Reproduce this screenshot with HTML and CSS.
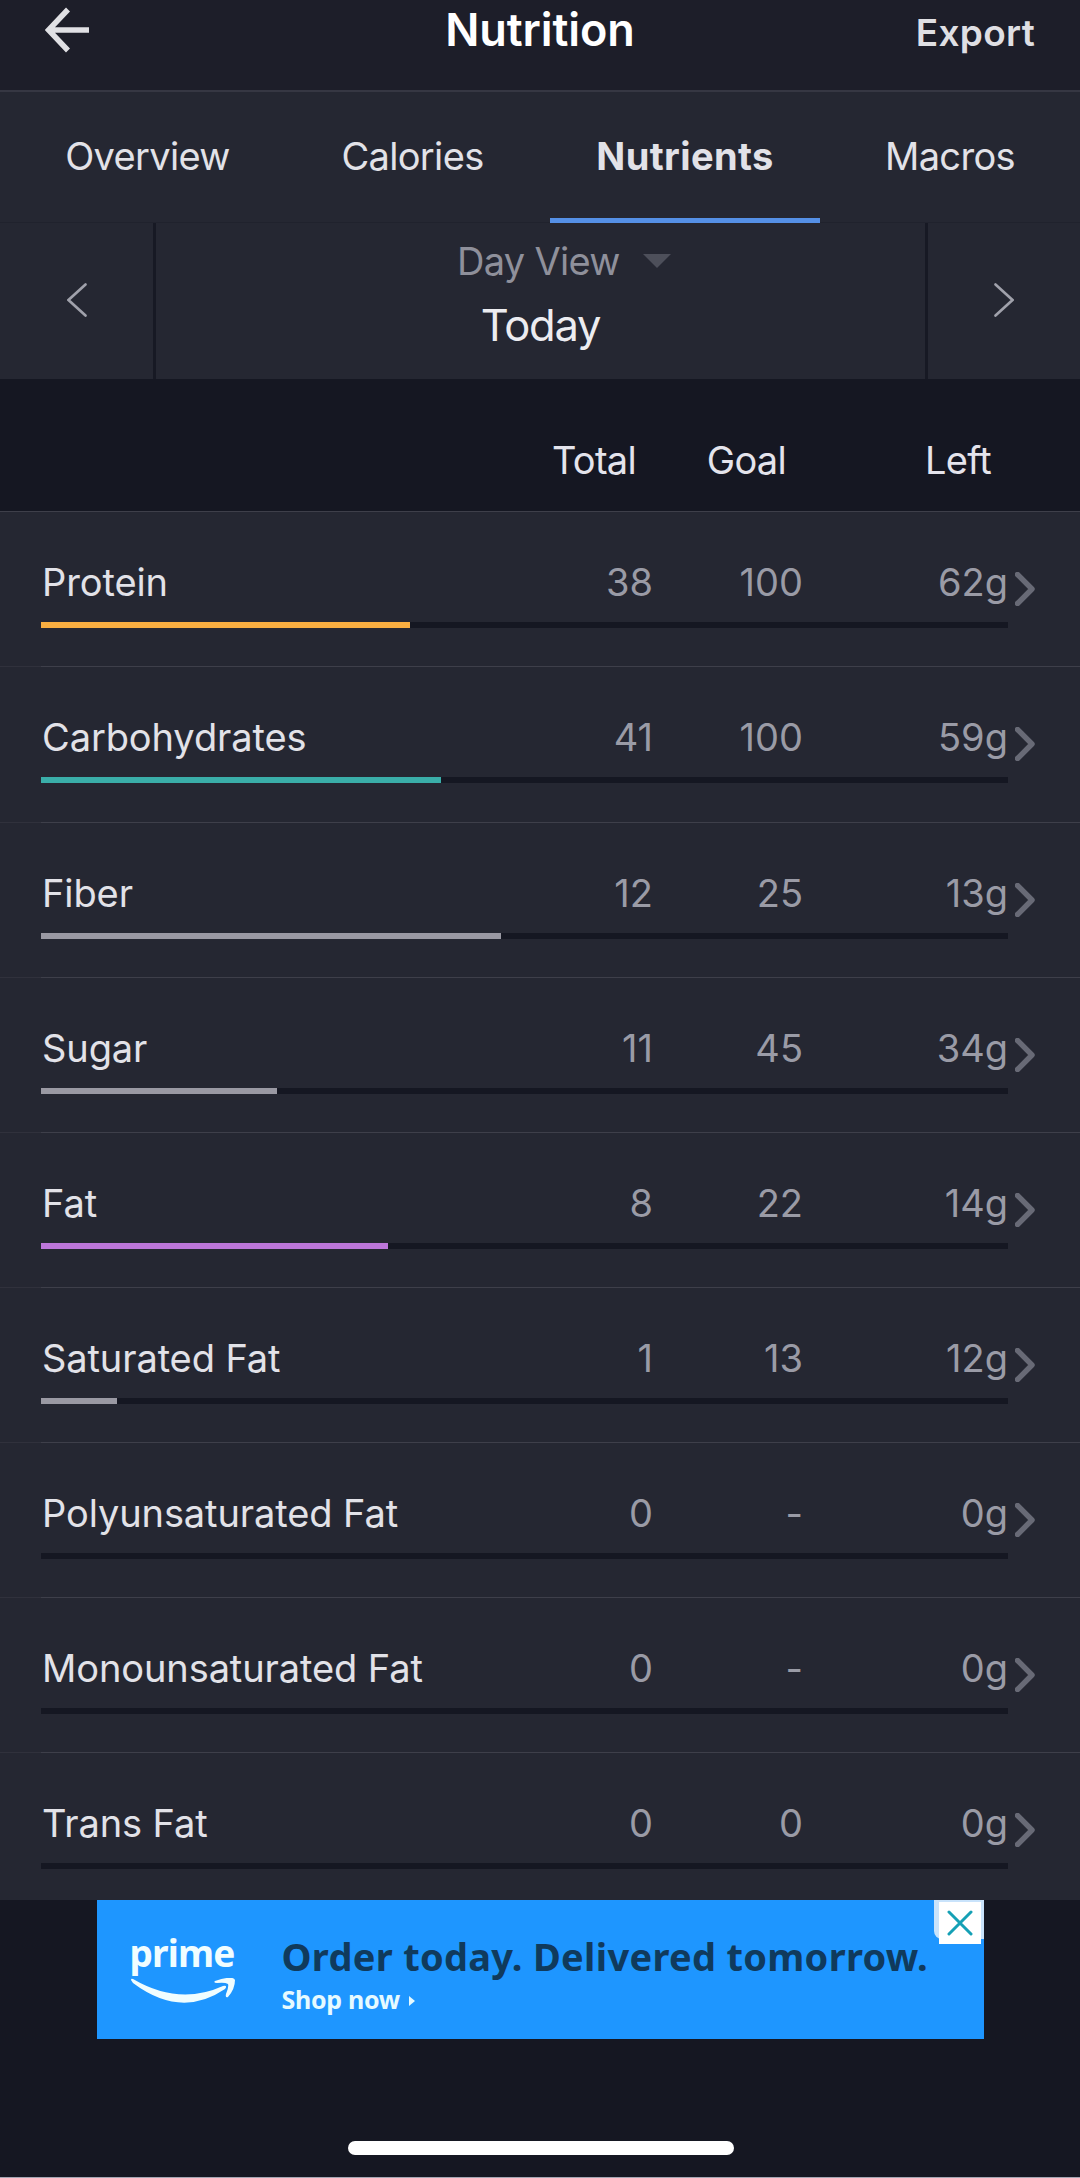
FILE: index.html
```
<!DOCTYPE html>
<html lang="en">
<head>
<meta charset="utf-8">
<meta name="viewport" content="width=device-width, initial-scale=1">
<title>Nutrition</title>
<link rel="stylesheet" href="styles.css">
</head>

<body>

<header class="topbar">
    <svg class="back" viewBox="0 0 44 46"><path d="M23 2.5 L3.5 23 L23 43.500 M4 23 H44" /></svg>
    <h1>Nutrition</h1>
    <a class="export">Export</a>
</header>

<nav class="tabs">
    <a>Overview</a>
    <a>Calories</a>
    <a class="active">Nutrients</a>
    <a>Macros</a>
</nav>

<section class="datenav">
    <div class="arrow"><svg viewBox="0 0 20 34"><path d="M18.500 1.500 L1.500 17 L18.500 32.500" /></svg></div>
    <div class="period">
        <div class="view"><span>Day View</span><svg viewBox="0 0 28 14"><path d="M0 0 H28 L14 14 Z" /></svg></div>
        <div class="day">Today</div>
    </div>
    <div class="arrow"><svg viewBox="0 0 20 34"><path d="M1.500 1.500 L18.500 17 L1.500 32.500" /></svg></div>
</section>

<div class="thead cols"><span></span><span>Total</span><span>Goal</span><span>Left</span></div>

<main class="list">
    <div class="row">
        <div class="cols"><span class="name">Protein</span><span>38</span><span>100</span><span>62g</span></div>
        <div class="bar"><div class="fill protein" style="width: 369px"></div></div>
        <svg class="more" viewBox="0 0 20 34"><path d="M2.500 2.500 L17 17 L2.500 31.500" /></svg>
    </div>
    <div class="row">
        <div class="cols"><span class="name">Carbohydrates</span><span>41</span><span>100</span><span>59g</span></div>
        <div class="bar"><div class="fill carbs" style="width: 400px"></div></div>
        <svg class="more" viewBox="0 0 20 34"><path d="M2.500 2.500 L17 17 L2.500 31.500" /></svg>
    </div>
    <div class="row">
        <div class="cols"><span class="name">Fiber</span><span>12</span><span>25</span><span>13g</span></div>
        <div class="bar"><div class="fill" style="width: 460px"></div></div>
        <svg class="more" viewBox="0 0 20 34"><path d="M2.500 2.500 L17 17 L2.500 31.500" /></svg>
    </div>
    <div class="row">
        <div class="cols"><span class="name">Sugar</span><span>11</span><span>45</span><span>34g</span></div>
        <div class="bar"><div class="fill" style="width: 236px"></div></div>
        <svg class="more" viewBox="0 0 20 34"><path d="M2.500 2.500 L17 17 L2.500 31.500" /></svg>
    </div>
    <div class="row">
        <div class="cols"><span class="name">Fat</span><span>8</span><span>22</span><span>14g</span></div>
        <div class="bar"><div class="fill fat" style="width: 347px"></div></div>
        <svg class="more" viewBox="0 0 20 34"><path d="M2.500 2.500 L17 17 L2.500 31.500" /></svg>
    </div>
    <div class="row">
        <div class="cols"><span class="name">Saturated Fat</span><span>1</span><span>13</span><span>12g</span></div>
        <div class="bar"><div class="fill" style="width: 76px"></div></div>
        <svg class="more" viewBox="0 0 20 34"><path d="M2.500 2.500 L17 17 L2.500 31.500" /></svg>
    </div>
    <div class="row">
        <div class="cols"><span class="name">Polyunsaturated Fat</span><span>0</span><span>-</span><span>0g</span></div>
        <div class="bar"></div>
        <svg class="more" viewBox="0 0 20 34"><path d="M2.500 2.500 L17 17 L2.500 31.500" /></svg>
    </div>
    <div class="row">
        <div class="cols"><span class="name">Monounsaturated Fat</span><span>0</span><span>-</span><span>0g</span></div>
        <div class="bar"></div>
        <svg class="more" viewBox="0 0 20 34"><path d="M2.500 2.500 L17 17 L2.500 31.500" /></svg>
    </div>
    <div class="row">
        <div class="cols"><span class="name">Trans Fat</span><span>0</span><span>0</span><span>0g</span></div>
        <div class="bar"></div>
        <svg class="more" viewBox="0 0 20 34"><path d="M2.500 2.500 L17 17 L2.500 31.500" /></svg>
    </div>
</main>

<footer class="bottom">
    <div class="ad">
        <div class="prime">
            <span>prime</span>
            <svg viewBox="0 0 104 26"><path d="M0 2 Q0 0 2 1 Q48 28 92 8 Q97 7 94 11 Q50 41 2 5 Z" /><path d="M84 3 Q102 -3 104 2 Q104 11 97 19 Q94 20 95 16 Q98 9 97 6 Q94 4 86 5 Q82 5 84 3 Z" /></svg>
        </div>
        <div class="copy">
            <div class="headline">Order today. Delivered tomorrow.</div>
            <div class="shop">Shop now<svg viewBox="0 0 6 10"><path d="M0 0 L6 5 L0 10 Z" /></svg></div>
        </div>
        <div class="adchoice"></div>
        <div class="close"><svg viewBox="0 0 26 26"><path d="M2 2 L24 24 M24 2 L2 24" /></svg></div>
    </div>
    <div class="home"></div>
</footer>

</body>
</html>
```
FILE: styles.css
```
* { box-sizing: border-box; }
body { margin: 0; width: 1080px; height: 2178px; overflow: hidden; display: flex; flex-direction: column; background-color: #151722; color: #e2e2e8; font-family: Inter, "Liberation Sans", sans-serif; font-size: 38px; line-height: 50px; white-space: nowrap; }
svg { display: block; fill: none; }

.topbar { flex: none; height: 92px; display: grid; grid-template-columns: 1fr auto 1fr; align-items: start; padding: 0 45px; background-color: #1d1e29; border-bottom: 2px solid #363743; }
.topbar .back { width: 44px; height: 46px; margin-top: 7px; stroke: #e0e0e4; stroke-width: 5.5; }
.topbar h1 { margin: 3px 0 0; font-size: 45px; line-height: 54px; font-weight: 600; letter-spacing: -0.1px; color: #fff; }
.topbar .export { justify-self: end; margin-top: 8px; font-size: 37px; font-weight: 600; letter-spacing: 0.3px; color: #dfdfe3; }

.tabs { flex: none; height: 131px; display: grid; grid-template-columns: 275px 275px 270px 260px; background-color: #252732; border-bottom: 1px solid #20222d; }
.tabs a { display: flex; justify-content: center; padding-top: 39px; letter-spacing: -0.65px; }
.tabs a:first-child { padding-left: 20px; }
.tabs .active { height: 132px; font-weight: 700; letter-spacing: 0.4px; border-bottom: 6px solid #5590e6; }

.datenav { flex: none; height: 156px; display: grid; grid-template-columns: 153px 1fr 152px; background-color: #252732; }
.datenav .arrow { display: flex; align-items: center; justify-content: center; padding-bottom: 2px; }
.datenav .arrow svg { width: 20px; height: 34px; stroke: #a0a1ab; stroke-width: 2.6; stroke-linecap: round; }
.period { border-left: 3px solid #171924; border-right: 3px solid #171924; padding-top: 13px; }
.view { display: flex; align-items: center; padding-left: 301px; color: #8f909b; letter-spacing: -0.7px; }
.view svg { width: 28px; height: 14px; margin-left: 23px; fill: #4d4f5a; }
.day { text-align: center; font-size: 43.5px; line-height: 54px; padding-top: 12px; letter-spacing: -1.2px; color: #ececf0; }

.cols { display: grid; grid-template-columns: 512px 100px 150px 205px; }
.cols span { text-align: right; }
.thead { flex: none; height: 132.3px; padding: 56px 0 0 24px; letter-spacing: -0.7px; color: #e4e4ec; }

.list { flex: none; height: 1388.7px; overflow: hidden; background-color: #252732; }
.row { position: relative; height: 155.15px; padding: 46px 0 0 41px; background: linear-gradient(to right, #30313c 41px, #3e3f4a 41px) top / 100% 1px no-repeat; }
.row:first-child { background-image: linear-gradient(#3e3f4a, #3e3f4a); }
.row .cols { color: #9a9ba6; }
.row .cols .name { padding-left: 1px; text-align: left; letter-spacing: -0.1px; color: #e2e2e8; }
.bar { width: 967px; height: 6px; margin-top: 15px; background-color: #151722; }
.fill { height: 6px; background-color: #9a99a3; }
.fill.protein { background-color: #f9ae41; }
.fill.carbs { background-color: #3aaea9; }
.fill.fat { background-color: #bd76da; }
.more { position: absolute; top: 61px; left: 1015px; width: 20px; height: 34px; stroke: #686a76; stroke-width: 5.4; stroke-linecap: round; stroke-linejoin: round; }

.bottom { flex: 1; display: flex; flex-direction: column; align-items: center; border-bottom: 1px solid #a5a5b3; }
.ad { position: relative; width: 887px; height: 139px; display: flex; background-color: #1e96ff; font-family: "Noto Sans", "Open Sans", sans-serif; font-weight: 700; }
.prime { width: 104px; margin: 28px 0 0 33px; color: #f0fdff; font-size: 37px; }
.prime span { display: block; height: 50px; letter-spacing: -0.8px; }
.prime svg { width: 104px; height: 26px; margin-left: 1px; fill: #f0fdff; }
.copy { margin: 30px 0 0 48px; }
.headline { color: #103a5c; font-size: 38px; line-height: 52px; letter-spacing: 0.3px; }
.shop { display: flex; align-items: center; color: #e6faff; font-size: 25px; line-height: 34px; letter-spacing: -0.3px; }
.shop svg { width: 6px; height: 10px; margin: 4px 0 0 9px; fill: #e6faff; }
.adchoice { position: absolute; top: 0; right: 0; width: 50px; height: 39px; border-radius: 0 0 0 8px; background-color: #c9e3fb; }
.close { position: absolute; top: 2px; right: 3px; width: 42px; height: 42px; padding: 8px; background-color: #fff; }
.close svg { width: 26px; height: 26px; stroke: #15a0b5; stroke-width: 3; stroke-linecap: round; }
.home { width: 386px; height: 14px; margin: 102px 0 0 2px; border-radius: 7px; background-color: #fff; }
```
